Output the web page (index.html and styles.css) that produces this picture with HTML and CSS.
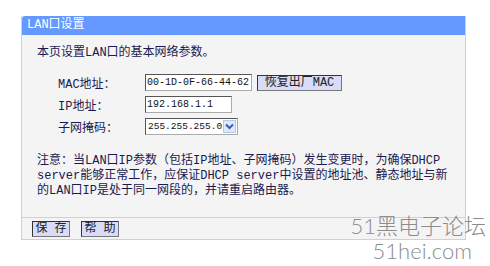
FILE: index.html
```html
<!DOCTYPE html>
<html lang="zh-CN">
<head>
  <meta charset="UTF-8">
  <title>LAN口设置</title>
  <link rel="stylesheet" href="styles.css">
</head>
<body>
  <div class="panel">
    <div class="panel-head">LAN口设置</div>
    <div class="panel-body">
      <p class="intro">本页设置LAN口的基本网络参数。</p>
      <div class="form">
        <div class="row">
          <label>MAC地址：</label>
          <input type="text" class="mac" value="00-1D-0F-66-44-62">
          <button class="btn btn-wide">恢复出厂MAC</button>
        </div>
        <div class="row">
          <label>IP地址：</label>
          <input type="text" class="ip" value="192.168.1.1">
        </div>
        <div class="row">
          <label>子网掩码：</label>
          <div class="select">
            <span>255.255.255.0</span>
            <span class="arrow">
              <svg width="9" height="7" viewBox="0 0 9 7"><path d="M1 1.5 L4.5 5 L8 1.5" fill="none" stroke="#3a5fb0" stroke-width="2"/></svg>
            </span>
          </div>
        </div>
      </div>
      <p class="note">注意：当LAN口IP参数（包括IP地址、子网掩码）发生变更时，为确保DHCP server能够正常工作，应保证DHCP server中设置的地址池、静态地址与新的LAN口IP是处于同一网段的，并请重启路由器。</p>
    </div>
    <div class="panel-foot">
      <button class="btn btn-small">保 存</button>
      <button class="btn btn-small">帮 助</button>
    </div>
  </div>
  <div class="watermark">
    <div class="wm-cn">51黑电子论坛</div>
    <div class="wm-en">51hei.com</div>
  </div>
</body>
</html>
```

FILE: styles.css
```css
:root {
  --head-color: #6699ff;
  --panel-bg: #f4f4f4;
  --border-color: #f0cc98;
  --text-color: #1a1a50;
  --btn-bg: #d9dcf8;
  --mono: "Liberation Mono", "Noto Sans CJK SC", monospace;
}

* {
  margin: 0;
  padding: 0;
  box-sizing: border-box;
}

body {
  background: #fff;
  font-family: var(--mono);
  font-size: 12px;
  color: var(--text-color);
  position: relative;
  width: 490px;
  height: 266px;
  overflow: hidden;
}

.panel {
  width: 445px;
  margin: 16px 0 0 21px;
  border: 1px solid var(--border-color);
  border-top: none;
  background: var(--panel-bg);
}

.panel-head {
  height: 19px;
  line-height: 19px;
  padding-left: 5px;
  background: var(--head-color);
  color: #fff;
  font-size: 12px;
  border-radius: 3px 0 0 0;
}

.panel-body {
  padding: 10px 0 0 15px;
  height: 182px;
}

.intro {
  line-height: 17px;
}

.form {
  margin: 12px 0 0 21px;
  display: flex;
  flex-direction: column;
  gap: 5px;
}

.row {
  display: flex;
  align-items: center;
  height: 17px;
}

.row label {
  width: 87px;
}

.row input,
.select {
  height: 17px;
  border: 1px solid #555;
  border-right-color: #aaa;
  border-bottom-color: #aaa;
  background: #fff;
  font-family: var(--mono);
  font-size: 10px;
  color: #111;
  padding: 0 1px;
  outline: none;
}

.mac {
  width: 107px;
}

.ip {
  width: 87px;
}

.select {
  width: 93px;
  display: flex;
  align-items: center;
  justify-content: space-between;
  padding: 0 1px 0 2px;
  font-size: 9.5px;
}

.arrow {
  width: 13px;
  height: 13px;
  display: flex;
  align-items: center;
  justify-content: center;
  background: #dfe8fb;
  border: 1px solid #b7c8ec;
}

.btn {
  height: 16px;
  padding: 0;
  background: var(--btn-bg);
  border: 1px solid #333;
  border-right-color: #777;
  border-bottom-color: #777;
  font-family: var(--mono);
  font-size: 12px;
  color: #222;
  line-height: 14px;
  white-space: nowrap;
}

.btn-wide {
  width: 85px;
  margin-left: 5px;
}

.note {
  margin-top: 19px;
  width: 422px;
  line-height: 15px;
}

.panel-foot {
  border-top: 1px solid var(--border-color);
  padding: 3px 0 2px 10px;
  display: flex;
  gap: 11px;
}

.btn-small {
  width: 38px;
}

.watermark {
  position: absolute;
  right: 4px;
  top: 213px;
  text-align: center;
  color: #8c8c8c;
  font-family: "Lato", "Noto Sans CJK SC", sans-serif;
  font-weight: 300;
}

.wm-cn {
  font-size: 22px;
  line-height: 26px;
}

.wm-en {
  font-size: 22px;
  line-height: 24px;
  padding-left: 8px;
}
```
